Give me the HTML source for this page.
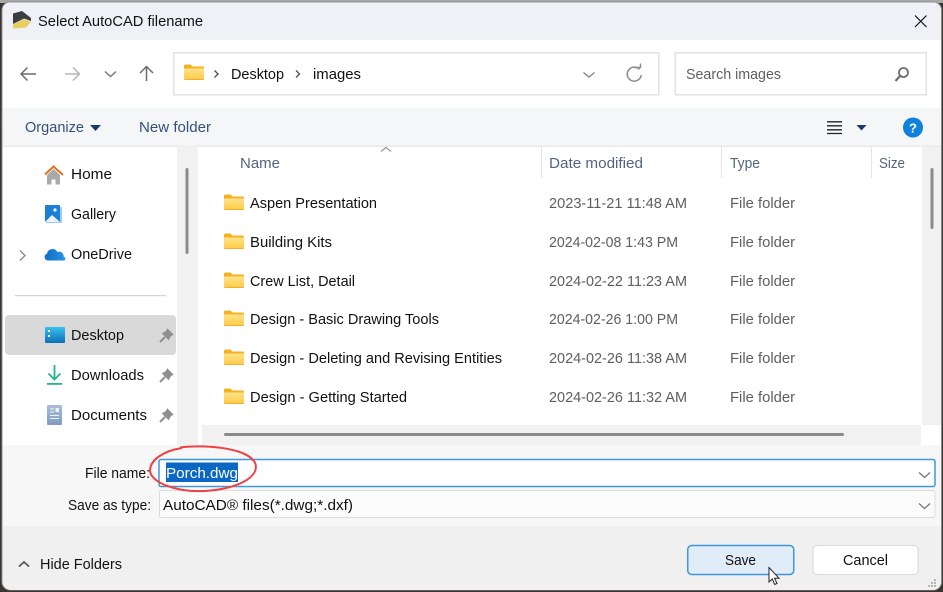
<!DOCTYPE html>
<html><head><meta charset="utf-8"><title>Select AutoCAD filename</title>
<style>
html,body{margin:0;padding:0;width:943px;height:592px;overflow:hidden;background:#3a3532}
svg{display:block}
text{font-family:"Liberation Sans",sans-serif;font-size:15px;fill:#111}
.h{fill:#556380}
.g{fill:#5f5f5f}
.b{fill:#34507a}
</style></head><body>
<svg width="943" height="592" viewBox="0 0 943 592" xmlns="http://www.w3.org/2000/svg">
<defs>
<linearGradient id="fg" x1="0" y1="0" x2="0" y2="1"><stop offset="0" stop-color="#ffe38a"/><stop offset="1" stop-color="#fdc944"/></linearGradient>
<linearGradient id="dg" x1="0" y1="0" x2="0" y2="1"><stop offset="0" stop-color="#35c1ec"/><stop offset="1" stop-color="#0f6fb8"/></linearGradient>
<linearGradient id="og" x1="0" y1="0" x2="1" y2="0"><stop offset="0" stop-color="#0f6cc8"/><stop offset="1" stop-color="#2b93e6"/></linearGradient>
<linearGradient id="cg" x1="0" y1="0" x2="0" y2="1"><stop offset="0" stop-color="#a9bfd8"/><stop offset="1" stop-color="#7f9dc0"/></linearGradient>
<symbol id="folder" viewBox="0 0 20 16" overflow="visible">
<path d="M0 2a1.500 1.500 0 0 1 1.500-1.500h5l2 2h10a1.500 1.500 0 0 1 1.500 1.500v2H0z" fill="#f5b121"/>
<path d="M0 4.500h20v10a1.500 1.500 0 0 1-1.500 1.500h-17A1.500 1.500 0 0 1 0 14.500z" fill="url(#fg)"/>
<path d="M0 15h20a1.500 1.500 0 0 1-1.500 1h-17A1.500 1.500 0 0 1 0 15z" fill="#eeb02f"/>
</symbol>
<symbol id="pin" viewBox="0 0 14 14" overflow="visible">
<path d="M8.500 0.500 13.500 5.500 11.500 6.500 9.500 10 4 4.500 7.500 2.500z" fill="#8f8f8f" stroke="#8f8f8f" stroke-width="1.500"/>
<path d="M6 8 1 13" stroke="#8f8f8f" stroke-width="2"/>
</symbol>
</defs>

<!-- window -->
<rect x="0" y="0" width="943" height="592" fill="#3a3532"/>
<rect x="0" y="0" width="943" height="3" fill="#a8a8a8"/>
<rect x="2" y="2" width="939.500" height="588" rx="8" fill="#fff" stroke="#8a8a8a" stroke-width="1"/>
<path d="M3 40V11a8 8 0 0 1 8-8h922a8 8 0 0 1 8 8v29z" fill="#eff1f6"/>
<rect x="3" y="40" width="938" height="68" fill="#fff"/>
<rect x="3" y="108" width="938" height="38" fill="#f5f6f8"/>
<rect x="3" y="145.500" width="938" height="1.500" fill="#eaeaea"/>

<!-- title bar -->
<path d="M13 13.500 L22 11 L31 18 L31 21 L24 18.500 L13 24z" fill="#3c3d40"/>
<path d="M13 24.500 L23.500 19 L31 21.500 L26 27.500 L14 28.500 Q13 28.500 13 27.500z" fill="#e9cd63"/>
<text x="38" y="26" textLength="165" lengthAdjust="spacingAndGlyphs">Select AutoCAD filename</text>
<path d="M915 15.500 L926.500 27 M926.500 15.500 L915 27" stroke="#111" stroke-width="1.200" fill="none"/>

<!-- nav -->
<g fill="none" stroke-width="1.500">
<path d="M36 74H21 M27.500 67.500 21 74l6.500 6.500" stroke="#6b6b6b"/>
<path d="M65 74h14 M73 67.500 79.500 74 73 80.500" stroke="#b5b5b5"/>
<path d="M105 71.500l5.500 5 5.500-5" stroke="#7a7a7a"/>
<path d="M146.500 81V66.500 M140 73l6.500-6.500L153 73" stroke="#6b6b6b"/>
</g>

<!-- address -->
<rect x="173.750" y="52.750" width="485" height="42" fill="#fff" stroke="#e2e2e2" stroke-width="1.500"/>
<use href="#folder" x="184" y="64" width="20" height="16"/>
<path d="M214.500 70.500l3.500 3.500-3.500 3.500 M296 70.500l3.500 3.500-3.500 3.500" stroke="#555" stroke-width="1.400" fill="none"/>
<text x="231" y="79" textLength="53" lengthAdjust="spacingAndGlyphs">Desktop</text>
<text x="313" y="79" textLength="48" lengthAdjust="spacingAndGlyphs">images</text>
<path d="M583.500 72.500l5.500 4.500 5.500-4.500" stroke="#808080" stroke-width="1.300" fill="none"/>
<path d="M639.500 69.500A7 7 0 1 0 641.200 75" stroke="#8a8a8a" stroke-width="1.500" fill="none"/>
<path d="M634 67.500h6.500v-4" stroke="#8a8a8a" stroke-width="1.400" fill="none"/>

<!-- search -->
<rect x="675.250" y="52.750" width="251" height="42" fill="#fff" stroke="#e2e2e2" stroke-width="1.500"/>
<text x="686" y="79" textLength="95" lengthAdjust="spacingAndGlyphs" class="g">Search images</text>
<circle cx="903.500" cy="72.500" r="4.500" fill="none" stroke="#6e6e6e" stroke-width="1.800"/>
<path d="M900 76 895.500 81" stroke="#6e6e6e" stroke-width="2.200"/>

<!-- command bar -->
<text x="25" y="132" textLength="59" lengthAdjust="spacingAndGlyphs" class="b">Organize</text>
<path d="M90 125h11l-5.500 6z" fill="#1f3864"/>
<text x="139" y="132" textLength="72" lengthAdjust="spacingAndGlyphs" class="b">New folder</text>
<path d="M827 121.800h15M827 125.800h15M827 129.800h15M827 133.500h15" stroke="#222" stroke-width="1.300"/>
<path d="M856.500 125h10l-5 5.500z" fill="#1f3864"/>
<circle cx="913" cy="127.500" r="10" fill="#0f80dc"/>
<text x="909" y="132.500" style="font-size:13px;font-weight:bold;fill:#fff">?</text>

<!-- sidebar -->
<rect x="177" y="146" width="21" height="299" fill="#f1f1f1"/>
<rect x="185.500" y="168" width="3" height="86" rx="1.500" fill="#8a8a8a"/>

<path d="M45 174.500 53.500 166.500 63 175" fill="none" stroke="#e3701c" stroke-width="2"/>
<path d="M47 175 53.500 169 60 175v9.500h-4.500v-5h-4v5H47z" fill="#a9a9a9"/>
<text x="71" y="179" textLength="41" lengthAdjust="spacingAndGlyphs">Home</text>

<path d="M46 207h15a1 1 0 0 1 1 1v14a1 1 0 0 1-1 1H46z" fill="#9ecbf0"/>
<rect x="45" y="205" width="15" height="17" rx="1" fill="#1b7fd6"/>
<circle cx="55" cy="210" r="1.600" fill="#fff"/>
<path d="M45 222l7-7 8 7z" fill="#e8f3fb"/>
<text x="71" y="219" textLength="45" lengthAdjust="spacingAndGlyphs">Gallery</text>

<path d="M20 250.500l5 5-5 5" stroke="#8a8a8a" stroke-width="1.400" fill="none"/>
<path d="M48 260.500a3.500 3.500 0 0 1-1-6.800 5.500 5.500 0 0 1 10.300-1.700 4.500 4.500 0 0 1 6.300 4.600 2.200 2.200 0 0 1 .9 3.900z" fill="url(#og)"/>
<text x="71" y="259" textLength="61" lengthAdjust="spacingAndGlyphs">OneDrive</text>

<rect x="15" y="295" width="151" height="1.200" fill="#d5d5d5"/>

<rect x="5" y="315" width="171" height="40" rx="4" fill="#d9d9d9"/>
<rect x="45" y="327" width="20" height="16" rx="1" fill="url(#dg)"/>
<rect x="48" y="330" width="2" height="2" fill="#fff"/><rect x="48" y="335" width="2" height="2" fill="#fff"/>
<text x="71" y="340" textLength="53" lengthAdjust="spacingAndGlyphs">Desktop</text>
<use href="#pin" x="159" y="329" width="14" height="14"/>

<path d="M54.500 365v14 M48.500 373.500 54.500 379.500l6-6" fill="none" stroke="#22b38f" stroke-width="1.800"/>
<rect x="47" y="383" width="15" height="1.800" fill="#22b38f"/>
<text x="71" y="380" textLength="73" lengthAdjust="spacingAndGlyphs">Downloads</text>
<use href="#pin" x="159" y="369" width="14" height="14"/>

<rect x="47" y="405" width="15" height="20" rx="1" fill="url(#cg)"/>
<path d="M50 409h4M50 412h4M50 415.500h9M50 418.500h9" stroke="#eef2f7" stroke-width="1.100"/>
<rect x="55.500" y="408" width="3.500" height="4" fill="#eef2f7"/>
<text x="71" y="420" textLength="76" lengthAdjust="spacingAndGlyphs">Documents</text>
<use href="#pin" x="159" y="409" width="14" height="14"/>

<!-- header -->
<path d="M381 151.500 386 147.500 391 151.500" fill="none" stroke="#8a8a8a" stroke-width="1.100"/>
<rect x="541" y="147" width="1" height="31" fill="#e5e5e5"/>
<rect x="721" y="147" width="1" height="31" fill="#e5e5e5"/>
<rect x="871" y="147" width="1" height="31" fill="#e5e5e5"/>
<text x="240" y="168" textLength="40" lengthAdjust="spacingAndGlyphs" class="h">Name</text>
<text x="549" y="168" textLength="94" lengthAdjust="spacingAndGlyphs" class="h">Date modified</text>
<text x="730" y="168" textLength="30" lengthAdjust="spacingAndGlyphs" class="h">Type</text>
<text x="879" y="168" textLength="26" lengthAdjust="spacingAndGlyphs" class="h">Size</text>

<!-- rows -->
<use href="#folder" x="224" y="194" width="20" height="16"/>
<text x="250" y="208" textLength="127" lengthAdjust="spacingAndGlyphs">Aspen Presentation</text>
<text x="549" y="208" textLength="138" lengthAdjust="spacingAndGlyphs" class="g">2023-11-21 11:48 AM</text>
<text x="730" y="208" textLength="65" lengthAdjust="spacingAndGlyphs" class="g">File folder</text>

<use href="#folder" x="224" y="233" width="20" height="16"/>
<text x="250" y="247" textLength="82" lengthAdjust="spacingAndGlyphs">Building Kits</text>
<text x="549" y="247" textLength="129" lengthAdjust="spacingAndGlyphs" class="g">2024-02-08 1:43 PM</text>
<text x="730" y="247" textLength="65" lengthAdjust="spacingAndGlyphs" class="g">File folder</text>

<use href="#folder" x="224" y="272" width="20" height="16"/>
<text x="250" y="286" textLength="105" lengthAdjust="spacingAndGlyphs">Crew List, Detail</text>
<text x="549" y="286" textLength="138" lengthAdjust="spacingAndGlyphs" class="g">2024-02-22 11:23 AM</text>
<text x="730" y="286" textLength="65" lengthAdjust="spacingAndGlyphs" class="g">File folder</text>

<use href="#folder" x="224" y="310" width="20" height="16"/>
<text x="250" y="324" textLength="189" lengthAdjust="spacingAndGlyphs">Design - Basic Drawing Tools</text>
<text x="549" y="324" textLength="129" lengthAdjust="spacingAndGlyphs" class="g">2024-02-26 1:00 PM</text>
<text x="730" y="324" textLength="65" lengthAdjust="spacingAndGlyphs" class="g">File folder</text>

<use href="#folder" x="224" y="349" width="20" height="16"/>
<text x="250" y="363" textLength="252" lengthAdjust="spacingAndGlyphs">Design - Deleting and Revising Entities</text>
<text x="549" y="363" textLength="138" lengthAdjust="spacingAndGlyphs" class="g">2024-02-26 11:38 AM</text>
<text x="730" y="363" textLength="65" lengthAdjust="spacingAndGlyphs" class="g">File folder</text>

<use href="#folder" x="224" y="388" width="20" height="16"/>
<text x="250" y="402" textLength="157" lengthAdjust="spacingAndGlyphs">Design - Getting Started</text>
<text x="549" y="402" textLength="138" lengthAdjust="spacingAndGlyphs" class="g">2024-02-26 11:32 AM</text>
<text x="730" y="402" textLength="65" lengthAdjust="spacingAndGlyphs" class="g">File folder</text>

<!-- scrollbars -->
<rect x="922" y="147" width="19" height="278" fill="#f1f1f1"/>
<rect x="930.500" y="168" width="3" height="61" rx="1.500" fill="#8a8a8a"/>
<rect x="202" y="425" width="719" height="20" fill="#f1f1f1"/>
<rect x="224" y="433" width="620" height="3" rx="1.500" fill="#8a8a8a"/>

<!-- bottom panel -->
<rect x="3" y="445" width="938" height="81" fill="#f7f7f7"/>
<path d="M3 526h938v56a8 8 0 0 1-8 8H11a8 8 0 0 1-8-8z" fill="#f0f0f0"/>

<text x="85" y="478" textLength="65" lengthAdjust="spacingAndGlyphs">File name:</text>
<rect x="159" y="459.500" width="776" height="27" rx="2" fill="#fff" stroke="#3f97dc" stroke-width="1.500"/>
<rect x="166" y="462.500" width="72" height="19.500" fill="#0a67c4"/>
<text x="166" y="478" textLength="72" lengthAdjust="spacingAndGlyphs" style="fill:#fff">Porch.dwg</text>
<path d="M919 472.500l5.500 5 5.500-5" fill="none" stroke="#777" stroke-width="1.300"/>

<text x="68" y="510" textLength="83" lengthAdjust="spacingAndGlyphs">Save as type:</text>
<rect x="159.500" y="490.500" width="775.500" height="27" rx="2" fill="#fbfbfb" stroke="#dcdcdc" stroke-width="1"/>
<text x="163" y="510" textLength="190" lengthAdjust="spacingAndGlyphs">AutoCAD® files(*.dwg;*.dxf)</text>
<path d="M919 503.500l5.500 5 5.500-5" fill="none" stroke="#777" stroke-width="1.300"/>

<path d="M180 447.500C205 444 250 448 255.500 464 259 478 236 489 205 491 175 492.500 151 482 150 471 150 460 163 451 182 448" fill="none" stroke="#ee4141" stroke-width="2"/>

<!-- footer -->
<path d="M19 566.500l5-4.500 5 4.500" fill="none" stroke="#555" stroke-width="1.700"/>
<text x="40" y="569" textLength="82" lengthAdjust="spacingAndGlyphs">Hide Folders</text>

<rect x="687.750" y="545.500" width="106" height="29" rx="4" fill="#e0ecf8" stroke="#3f97dc" stroke-width="1.500"/>
<text x="725" y="565" textLength="31" lengthAdjust="spacingAndGlyphs">Save</text>
<rect x="813" y="545.500" width="105" height="29" rx="4" fill="#fff" stroke="#d8d8d8" stroke-width="1"/>
<text x="843" y="565" textLength="45" lengthAdjust="spacingAndGlyphs">Cancel</text>

<path d="M769 567.500v14.500l3.300-3 2.400 5.500 2.300-1-2.400-5.300h4.400z" fill="#fff" stroke="#222" stroke-width="1"/>

<g fill="#b5b5b5">
<rect x="934" y="579" width="2" height="2"/><rect x="931" y="582" width="2" height="2"/><rect x="934" y="582" width="2" height="2"/>
<rect x="928" y="585" width="2" height="2"/><rect x="931" y="585" width="2" height="2"/><rect x="934" y="585" width="2" height="2"/>
</g>
</svg>
</body></html>
